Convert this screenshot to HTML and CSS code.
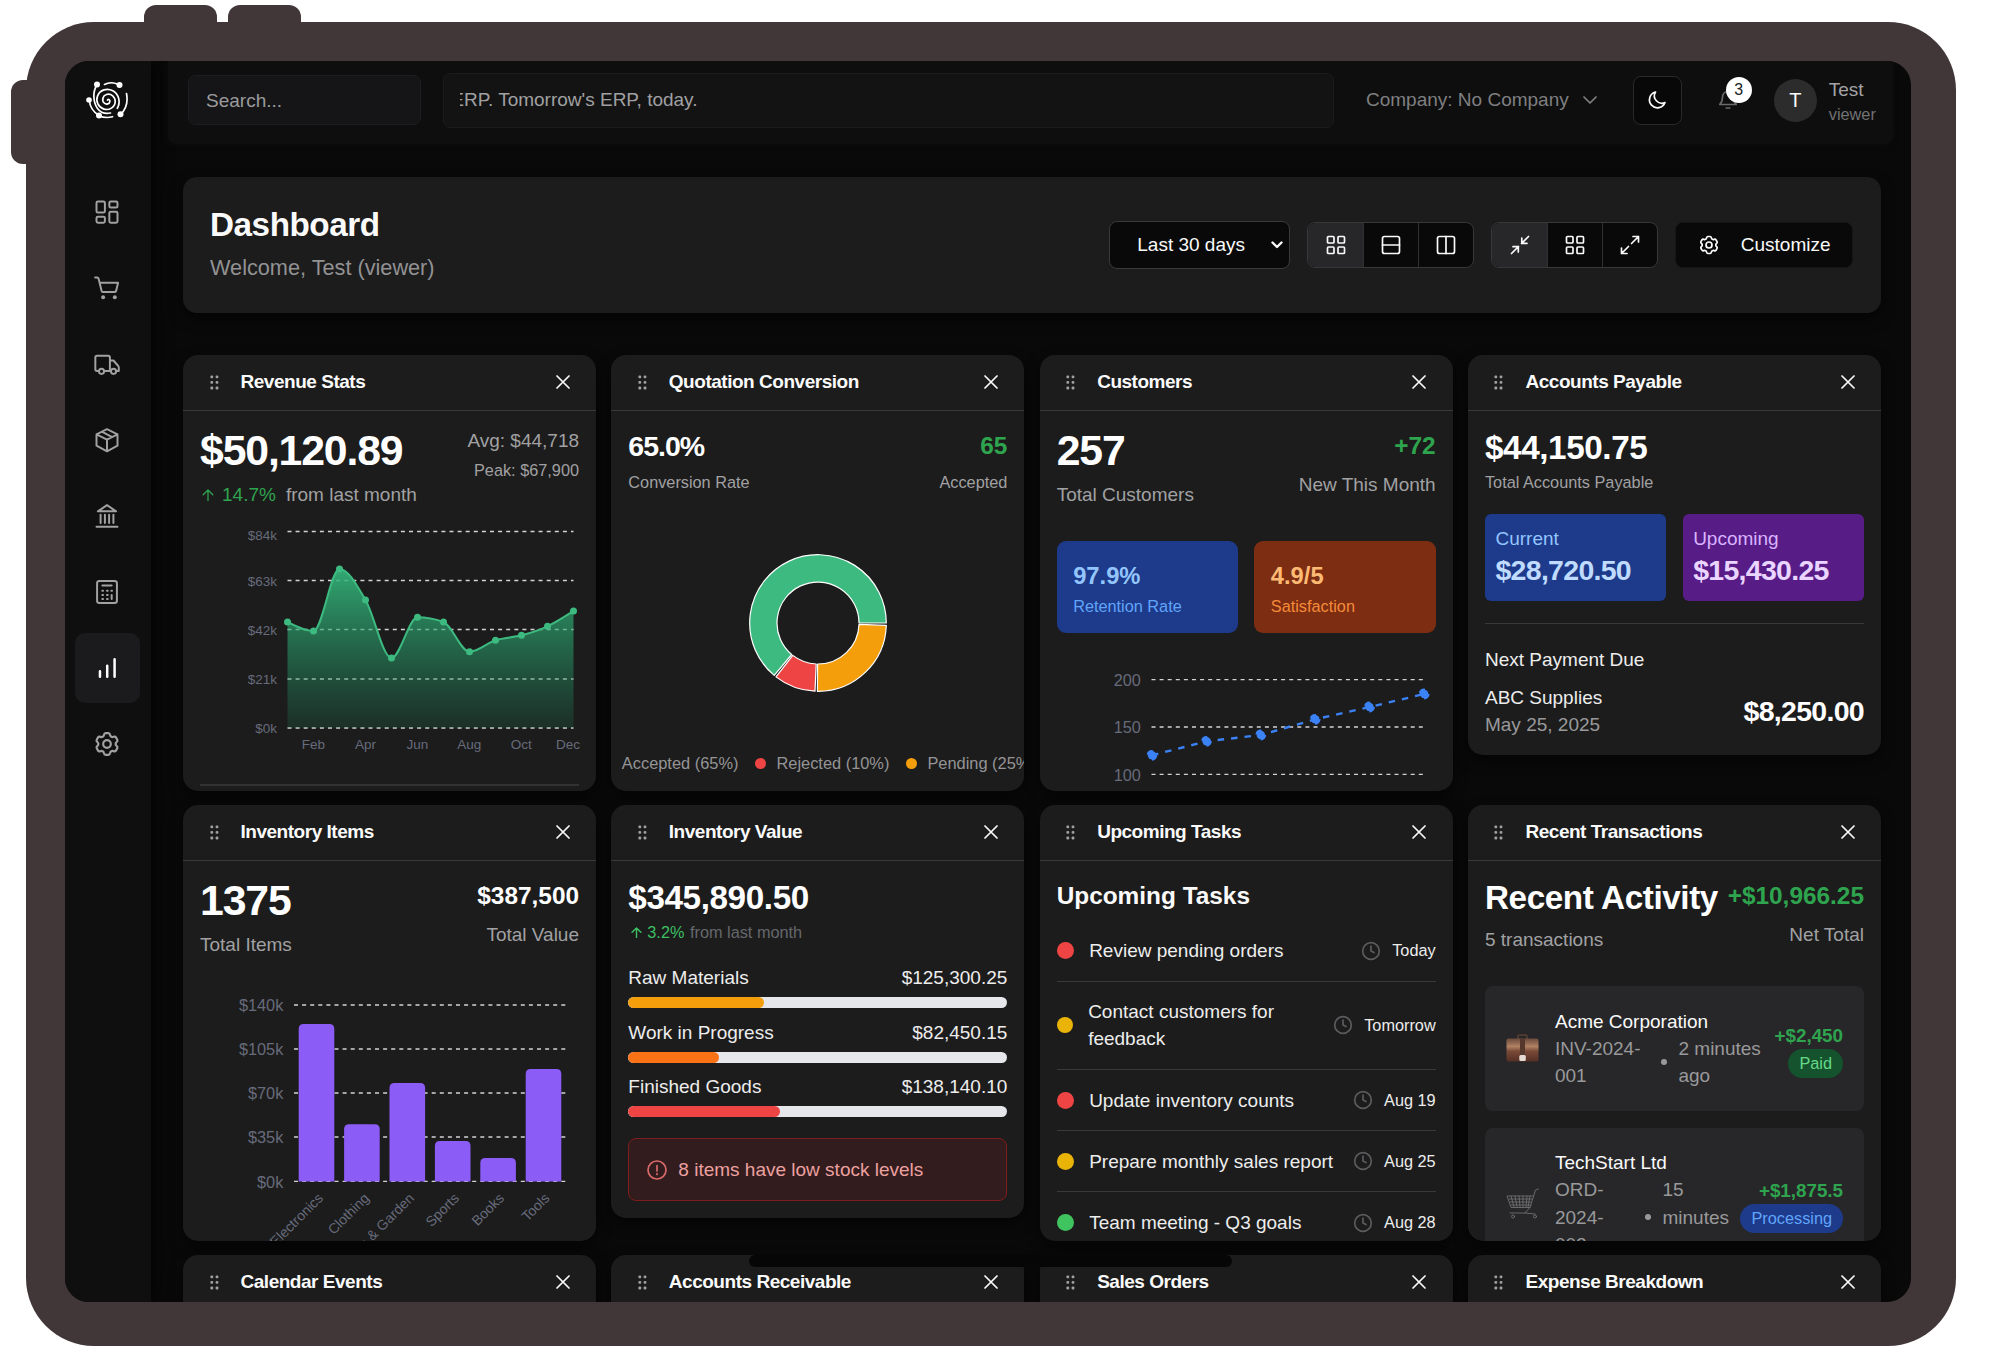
FILE: index.html
```html
<!DOCTYPE html>
<html lang="en">
<head>
  <meta charset="UTF-8">
  <meta name="viewport" content="width=device-width, initial-scale=1.0">
  <title>Dashboard</title>
  <link rel="stylesheet" href="styles.css">
</head>
<body>
  <!-- shared icons -->
  <svg width="0" height="0" class="sprite">
    <symbol id="i-close" viewBox="0 0 14 14"><path d="M1 1l12 12M13 1L1 13"/></symbol>
    <symbol id="i-drag" viewBox="0 0 9 15"><g fill="currentColor" stroke="none"><rect x="0.4" y="0.4" width="2.8" height="2.8" rx="1"/><rect x="5.6" y="0.4" width="2.8" height="2.8" rx="1"/><rect x="0.4" y="6" width="2.8" height="2.8" rx="1"/><rect x="5.6" y="6" width="2.8" height="2.8" rx="1"/><rect x="0.4" y="11.6" width="2.8" height="2.8" rx="1"/><rect x="5.6" y="11.6" width="2.8" height="2.8" rx="1"/></g></symbol>
    <symbol id="i-gear" viewBox="1 0 22 22"><path d="M9.6 3.9c.2-1 .5-1.4 1.3-1.4h2.2c.8 0 1.1.4 1.3 1.4.2 1.3 1.5 2 2.7 1.5 1-.4 1.5-.3 1.9.4l1.1 1.9c.4.7.2 1.200-.6 1.800-1 .8-1 2.200 0 3 .8.700 1 1.100.6 1.800l-1.100 1.900c-.4.7-.9.8-1.900.4-1.200-.5-2.500.2-2.700 1.500-.2 1-.5 1.400-1.300 1.400h-2.200c-.8 0-1.100-.4-1.300-1.400-.2-1.300-1.500-2-2.700-1.500-1 .4-1.500.3-1.900-.4l-1.100-1.900c-.4-.7-.2-1.100.6-1.800 1-.8 1-2.200 0-3-.8-.6-1-1.100-.6-1.800l1.100-1.900c.4-.7.9-.8 1.900-.4 1.200.5 2.500-.2 2.700-1.500z"/><circle cx="12" cy="11" r="3"/></symbol>
    <symbol id="i-grid" viewBox="0 0 20 20"><rect x="1.5" y="1.5" width="6.5" height="6.5" rx="1"/><rect x="12" y="1.5" width="6.5" height="6.5" rx="1"/><rect x="1.5" y="12" width="6.5" height="6.5" rx="1"/><rect x="12" y="12" width="6.5" height="6.5" rx="1"/></symbol>
    <symbol id="i-clock" viewBox="0 0 20 20"><circle cx="10" cy="10" r="8.3"/><path d="M10 5v5l3 1.6"/></symbol>
    <symbol id="i-up" viewBox="0 0 12 12"><path d="M6 11.5V1.2M1.2 5.7L6 1l4.8 4.7"/></symbol>
  </svg>

  <div class="device">
    <i class="key key-a"></i><i class="key key-b"></i><i class="key key-c"></i>

    <div class="screen">
      <nav class="sidebar">
        <svg class="logo" viewBox="0 0 44 40">
          <path d="M22.5 20c1-1.2 2.6-.2 2.4 1.4-.3 2.7-3.7 3.5-5.7 1.6-2.7-2.6-1.5-7.4 2.3-8.5 4.7-1.4 8.900 2.600 8.700 7.200-.3 5.700-6 8.900-11.300 7.400-5.600-1.700-8.400-7.700-6.400-13 2.300-6.300 9.700-8.400 15.300-5.300 6.300 3.500 8 11.600 4.500 17.500"/>
          <path d="M12 5C7.500 11.500 8 22 12.500 28.500c3 4 8 5.500 13 4.500M4.300 20c.5 6.500 4 12 9.700 15.500M34 5c-4-2.500-10-2.800-14.500-.6M35.500 34.300c5.500-5 7.500-13 6-20.800M14 35.700c4.500 2 9 2.300 13.500 1"/>
          <g class="nodes"><circle cx="12" cy="4.500" r="3"/><circle cx="34.500" cy="5" r="3"/><circle cx="4" cy="20" r="2.800"/><circle cx="14" cy="35.500" r="3"/><circle cx="35.500" cy="34.300" r="3"/></g>
        </svg>
        <a class="nav-item"><svg viewBox="0 0 24 24"><rect x="3" y="3" width="7.2" height="9.5" rx="1.2"/><rect x="14" y="3" width="7" height="5.2" rx="1.2"/><rect x="14" y="11.7" width="7" height="9.5" rx="1.2"/><rect x="3" y="16" width="7.2" height="5.2" rx="1.2"/></svg></a>
        <a class="nav-item"><svg viewBox="0 0 24 24"><path d="M1.8 3h1.7c.7 0 1.1.3 1.3 1l2.6 10.5c.2.7.6 1 1.3 1h9.7c.7 0 1.2-.4 1.4-1l1.7-7H5.6"/><g class="solid"><circle cx="8.7" cy="20" r="1.7"/><circle cx="18.7" cy="20" r="1.7"/></g></svg></a>
        <a class="nav-item"><svg viewBox="0 0 24 24"><path d="M5 18H3.5c-.9 0-1.500-.6-1.500-1.500v-10C2 5.600 2.600 5 3.500 5H13c.9 0 1.500.6 1.500 1.500V18H9.500M14.500 9h3l4 4.500c.4.500.6 1 .6 1.500V18h-1.600"/><circle cx="7.300" cy="18.300" r="2.200"/><circle cx="17.600" cy="18.300" r="2.200"/></svg></a>
        <a class="nav-item"><svg viewBox="0 0 24 24"><path d="M12 2.700l9 4.400v9.800l-9 4.800-9-4.800V7.100zM3 7.100l9 4.500 9-4.500M12 11.600v10M7.500 4.900l9 4.600"/></svg></a>
        <a class="nav-item"><svg viewBox="0 0 24 24"><path d="M3 21.300h18M12 2.700L4.200 8h15.600zM6.500 11v7M10.200 11v7M13.800 11v7M17.500 11v7"/></svg></a>
        <a class="nav-item"><svg viewBox="0 0 24 24"><rect x="3.500" y="2.500" width="17" height="19" rx="2"/><path d="M8 6.500h8M8 11h.6M12 11h.6M15.700 11h.6M8 14.500h.6M12 14.500h.6M8 18h.6M12 18h.6M16 14.500V18"/></svg></a>
        <a class="nav-item active"><svg viewBox="0 0 24 24"><path d="M5.500 20v-5M12.200 20V10M19 20V4"/></svg></a>
        <a class="nav-item"><svg viewBox="0 0 24 24"><use href="#i-gear"/></svg></a>
      </nav>

      <div class="main">
        <header class="topbar">
          <div class="search">Search...</div>
          <div class="ticker"><span>ERP. Tomorrow's ERP, today.</span></div>
          <div class="company">Company: No Company <svg viewBox="0 0 14 8"><path d="M1 1l6 6 6-6"/></svg></div>
          <div class="theme"><svg viewBox="0 0 20 20"><path d="M8.500 2A8 8 0 1 0 18 12.500 7.400 7.400 0 0 1 8.500 2z"/></svg></div>
          <div class="bell">
            <svg viewBox="0 0 20 22"><path d="M10 2.500c-3.500 0-5.500 2.500-5.500 6 0 4-1.200 5.300-2.700 7h16.400c-1.500-1.700-2.700-3-2.700-7 0-3.500-2-6-5.500-6zM8.300 19h3.400"/></svg>
            <span class="count">3</span>
          </div>
          <div class="avatar">T</div>
          <div class="who"><div>Test</div><small>viewer</small></div>
        </header>

        <section class="hero">
          <div>
            <h1>Dashboard</h1>
            <p>Welcome, Test (viewer)</p>
          </div>
          <div class="tools">
            <div class="select">Last 30 days <svg viewBox="0 0 12 8"><path d="M1.500 1.500L6 6l4.500-4.500"/></svg></div>
            <div class="group">
              <span class="on"><svg viewBox="0 0 20 20"><use href="#i-grid"/></svg></span>
              <span><svg viewBox="0 0 20 20"><rect x="1.500" y="1.500" width="17" height="17" rx="2"/><path d="M1.500 10h17"/></svg></span>
              <span><svg viewBox="0 0 20 20"><rect x="1.500" y="1.500" width="17" height="17" rx="2"/><path d="M10 1.500v17"/></svg></span>
            </div>
            <div class="group">
              <span class="on"><svg viewBox="0 0 20 20"><path d="M18.500 1.500l-7 7M11.800 3v5.300H17M1.500 18.500l7-7M3 11.700h5.300V17"/></svg></span>
              <span><svg viewBox="0 0 20 20"><use href="#i-grid"/></svg></span>
              <span><svg viewBox="0 0 20 20"><path d="M11.500 8.500l7-7M13 1.500h5.500V7M8.500 11.500l-7 7M1.500 13v5.500H7"/></svg></span>
            </div>
            <div class="customize"><svg viewBox="0 0 24 24"><use href="#i-gear"/></svg>Customize</div>
          </div>
        </section>

        <div class="cards">
          <article class="card tall">
            <header><svg class="drag"><use href="#i-drag"/></svg><h2>Revenue Stats</h2><svg class="close"><use href="#i-close"/></svg></header>
            <div class="body">
              <div class="top">
                <div><div class="xl">$50,120.89</div><div class="trend"><svg><use href="#i-up"/></svg><b>14.7%</b> from last month</div></div>
                <div class="right"><div class="avg">Avg: $44,718</div><div class="sm peak">Peak: $67,900</div></div>
              </div>
              <svg class="chart chart-revenue" viewBox="0 0 380 240">
                <defs><linearGradient id="fade" x1="0" y1="0" x2="0" y2="1"><stop offset="0" stop-color="#34b87c" stop-opacity=".9"/><stop offset="1" stop-color="#1f8a5f" stop-opacity=".18"/></linearGradient></defs>
                <path class="lines" d="M87.500 11.500h286M87.500 60.500h286M87.500 109.500h286M87.500 159h286M87.500 208h286"/>
                <path fill="url(#fade)" d="M87.500 102C96.200 106.500 104.800 111 113.500 111C122.200 111 130.800 49 139.500 49C148.200 49 156.800 65.200 165.500 80C174.200 94.800 182.800 138 191.500 138C200.200 138 208.800 97.300 217.500 97.300C226.200 97.300 234.800 98.900 243.500 102C252.200 105.100 260.800 131.700 269.500 131.700C278.200 131.700 286.800 123 295.500 120.300C304.200 117.600 312.800 117.600 321.500 115.300C330.200 113 338.800 110.300 347.500 106.300C356.200 102.200 364.800 96.600 373.500 91V208H87.500z"/>
                <path class="green-line" d="M87.500 102C96.200 106.500 104.800 111 113.500 111C122.200 111 130.800 49 139.500 49C148.200 49 156.800 65.200 165.500 80C174.200 94.800 182.800 138 191.500 138C200.200 138 208.800 97.300 217.500 97.300C226.200 97.300 234.800 98.900 243.500 102C252.200 105.100 260.800 131.700 269.500 131.700C278.200 131.700 286.800 123 295.500 120.300C304.200 117.600 312.800 117.600 321.500 115.300C330.200 113 338.800 110.300 347.500 106.300C356.200 102.200 364.800 96.600 373.500 91"/>
                <g fill="#3dba80"><circle cx="87.500" cy="102" r="3.500"/><circle cx="113.500" cy="111" r="3.500"/><circle cx="139.500" cy="49" r="3.500"/><circle cx="165.500" cy="80" r="3.500"/><circle cx="191.500" cy="138" r="3.500"/><circle cx="217.500" cy="97.300" r="3.500"/><circle cx="243.500" cy="102" r="3.500"/><circle cx="269.500" cy="131.700" r="3.500"/><circle cx="295.500" cy="120.300" r="3.500"/><circle cx="321.500" cy="115.300" r="3.500"/><circle cx="347.500" cy="106.300" r="3.500"/><circle cx="373.500" cy="91" r="3.500"/></g>
                <g class="ylab"><text x="77" y="19.500">$84k</text><text x="77" y="65.700">$63k</text><text x="77" y="114.700">$42k</text><text x="77" y="164">$21k</text><text x="77" y="213">$0k</text></g>
                <g class="xlab"><text x="113.500" y="228.500">Feb</text><text x="165.500" y="228.500">Apr</text><text x="217.300" y="228.500">Jun</text><text x="269.300" y="228.500">Aug</text><text x="321.300" y="228.500">Oct</text><text x="368" y="228.500">Dec</text></g>
              </svg>
              <hr>
            </div>
          </article>

          <article class="card tall">
            <header><svg class="drag"><use href="#i-drag"/></svg><h2>Quotation Conversion</h2><svg class="close"><use href="#i-close"/></svg></header>
            <div class="body">
              <div class="top">
                <div><div class="md rate">65.0%</div><div class="sm sub-tight">Conversion Rate</div></div>
                <div class="right"><div class="lg green">65</div><div class="sm sub-tight">Accepted</div></div>
              </div>
              <svg class="donut" viewBox="-70 -70 140 140">
                <path fill="#3dba80" d="M68.300 0A68.300 68.300 0 1 0 -43.800 52.400L-26.300 31.500A41 41 0 1 1 41 0z"/>
                <path fill="#ef4444" d="M-42 53.900A68.300 68.300 0 0 0 -3 68.200L-1.800 41A41 41 0 0 1 -25.200 32.400z"/>
                <path fill="#f59e0b" d="M-.6 68.300A68.300 68.300 0 0 0 68.300 2.400L41 1.400A41 41 0 0 1 -.4 41z"/>
              </svg>
              <div class="legend"><span><i class="bg-green"></i>Accepted (65%)</span><span><i class="bg-red"></i>Rejected (10%)</span><span><i class="bg-orange"></i>Pending (25%)</span></div>
            </div>
          </article>

          <article class="card tall">
            <header><svg class="drag"><use href="#i-drag"/></svg><h2>Customers</h2><svg class="close"><use href="#i-close"/></svg></header>
            <div class="body">
              <div class="top">
                <div><div class="xl">257</div><div class="sub">Total Customers</div></div>
                <div class="right"><div class="lg green">+72</div><div class="sub-r">New This Month</div></div>
              </div>
              <div class="tiles rates">
                <div class="tile blue"><strong>97.9%</strong><span>Retention Rate</span></div>
                <div class="tile brown"><strong>4.9/5</strong><span>Satisfaction</span></div>
              </div>
              <svg class="chart chart-customers" viewBox="0 0 380 200">
                <path class="lines" d="M94.500 19.700h273.500M94.500 67h273.500M94.500 114.300h273.500"/>
                <path class="blue-line" d="M95 95.300L149.500 81.300 203.800 75 258.200 59.300 312.500 47 367.200 34"/>
                <g class="blue-dots"><circle cx="95" cy="95.300" r="4.200"/><circle cx="149.500" cy="81.300" r="4.200"/><circle cx="203.800" cy="75" r="4.200"/><circle cx="258.200" cy="59.300" r="4.200"/><circle cx="312.500" cy="47" r="4.200"/><circle cx="367.200" cy="34" r="4.200"/></g>
                <g class="ylab big"><text x="83.800" y="26">200</text><text x="83.800" y="73.300">150</text><text x="83.800" y="120.600">100</text></g>
              </svg>
            </div>
          </article>

          <article class="card">
            <header><svg class="drag"><use href="#i-drag"/></svg><h2>Accounts Payable</h2><svg class="close"><use href="#i-close"/></svg></header>
            <div class="body">
              <div class="xmd">$44,150.75</div>
              <div class="sm total">Total Accounts Payable</div>
              <div class="tiles due">
                <div class="tile blue"><span>Current</span><strong>$28,720.50</strong></div>
                <div class="tile purple"><span>Upcoming</span><strong>$15,430.25</strong></div>
              </div>
              <div class="next">
                <div class="next-title">Next Payment Due</div>
                <div class="next-row"><div>ABC Supplies<br><span>May 25, 2025</span></div><strong class="md">$8,250.00</strong></div>
              </div>
            </div>
          </article>

          <article class="card tall">
            <header><svg class="drag"><use href="#i-drag"/></svg><h2>Inventory Items</h2><svg class="close"><use href="#i-close"/></svg></header>
            <div class="body">
              <div class="top">
                <div><div class="xl">1375</div><div class="sub">Total Items</div></div>
                <div class="right"><div class="lg">$387,500</div><div class="sub-r">Total Value</div></div>
              </div>
              <svg class="chart chart-items" viewBox="0 0 380 260">
                <path class="lines" d="M94 15h273M94 59h273M94 103h273M94 147h273M94 191.400h273"/>
                <g fill="#8b5cf6">
                  <path d="M98.700 191.400V39q0-5 5-5h25.600q5 0 5 5v152.400z"/>
                  <path d="M144.100 191.400V139.300q0-5 5-5h25.600q5 0 5 5v52.100z"/>
                  <path d="M189.500 191.400V97.900q0-5 5-5h25.600q5 0 5 5v93.500z"/>
                  <path d="M234.900 191.400V156q0-5 5-5h25.600q5 0 5 5v35.400z"/>
                  <path d="M280.300 191.400V172.900q0-5 5-5h25.600q5 0 5 5v18.500z"/>
                  <path d="M325.700 191.400V84q0-5 5-5h25.600q5 0 5 5v107.400z"/>
                </g>
                <g class="ylab big"><text x="83.300" y="21.300">$140k</text><text x="83.300" y="65.300">$105k</text><text x="83.300" y="109.300">$70k</text><text x="83.300" y="153.300">$35k</text><text x="83.300" y="197.500">$0k</text></g>
                <g class="tilt"><text transform="translate(124 209) rotate(-45)">Electronics</text><text transform="translate(170 209) rotate(-45)">Clothing</text><text transform="translate(215 209) rotate(-45)">Home &amp; Garden</text><text transform="translate(260 209) rotate(-45)">Sports</text><text transform="translate(305 209) rotate(-45)">Books</text><text transform="translate(350.500 209) rotate(-45)">Tools</text></g>
              </svg>
            </div>
          </article>

          <article class="card">
            <header><svg class="drag"><use href="#i-drag"/></svg><h2>Inventory Value</h2><svg class="close"><use href="#i-close"/></svg></header>
            <div class="body">
              <div class="xmd">$345,890.50</div>
              <div class="sm total growth"><svg><use href="#i-up"/></svg><b>3.2%</b> from last month</div>
              <div class="stock">
                <div class="stock-row"><span>Raw Materials</span><span>$125,300.25</span></div>
                <div class="meter"><i class="bg-orange" style="width: 35.8%"></i></div>
                <div class="stock-row"><span>Work in Progress</span><span>$82,450.15</span></div>
                <div class="meter"><i class="bg-deep" style="width: 24%"></i></div>
                <div class="stock-row"><span>Finished Goods</span><span>$138,140.10</span></div>
                <div class="meter"><i class="bg-red" style="width: 40%"></i></div>
              </div>
              <div class="alert"><svg viewBox="0 0 20 20"><circle cx="10" cy="10" r="9"/><path d="M10 5.500v5.500M10 13.500v1"/></svg>8 items have low stock levels</div>
            </div>
          </article>

          <article class="card tall">
            <header><svg class="drag"><use href="#i-drag"/></svg><h2>Upcoming Tasks</h2><svg class="close"><use href="#i-close"/></svg></header>
            <div class="body">
              <h3>Upcoming Tasks</h3>
              <ul class="tasks">
                <li><i class="bg-red"></i><span>Review pending orders</span><svg><use href="#i-clock"/></svg><time>Today</time></li>
                <li><i class="bg-yellow small"></i><span>Contact customers for<br>feedback</span><svg><use href="#i-clock"/></svg><time>Tomorrow</time></li>
                <li><i class="bg-red"></i><span>Update inventory counts</span><svg><use href="#i-clock"/></svg><time>Aug 19</time></li>
                <li><i class="bg-yellow"></i><span>Prepare monthly sales report</span><svg><use href="#i-clock"/></svg><time>Aug 25</time></li>
                <li><i class="bg-lime"></i><span>Team meeting - Q3 goals</span><svg><use href="#i-clock"/></svg><time>Aug 28</time></li>
              </ul>
            </div>
          </article>

          <article class="card tall">
            <header><svg class="drag"><use href="#i-drag"/></svg><h2>Recent Transactions</h2><svg class="close"><use href="#i-close"/></svg></header>
            <div class="body">
              <div class="top">
                <div><div class="xmd">Recent Activity</div><div class="sub-a">5 transactions</div></div>
                <div class="right"><div class="lg green">+$10,966.25</div><div class="sub-r">Net Total</div></div>
              </div>
              <div class="deals">
                <div class="deal">
                  <svg class="emoji" viewBox="0 0 33 33">
                    <defs><linearGradient id="leather" x1="0" y1="0" x2="0" y2="1"><stop offset="0" stop-color="#6b4a3c"/><stop offset=".35" stop-color="#b08263"/><stop offset=".55" stop-color="#7a4a38"/><stop offset="1" stop-color="#553025"/></linearGradient></defs>
                    <path d="M12 7V4.500Q12 3 14 3h5q2 0 2 1.500V7" fill="none" stroke="#4e3a32" stroke-width="2"/>
                    <rect x=".5" y="6.500" width="32" height="23" rx="2" fill="url(#leather)"/>
                    <rect x="14" y="6.500" width="5" height="18" fill="#56382c"/>
                    <rect x="13.300" y="23" width="6.500" height="6" rx="1.500" fill="#e4dcd4"/>
                  </svg>
                  <div class="info"><div class="name">Acme Corporation</div><div class="meta"><span class="ref">INV-2024-<br>001</span><i></i><span>2 minutes<br>ago</span></div></div>
                  <div class="sum"><b>+$2,450</b><em class="paid">Paid</em></div>
                </div>
                <div class="deal">
                  <svg class="emoji cart" viewBox="0 0 33 33">
                    <path d="M32.500 2l-3 1-5.500 17.500H5L1 9h26M3 12h23M4 15h21M5 18h20M5 9l3 11M9 9l2 11M13 9l1 11M17 9v11M21 9l-1 11M24 9l-2 11M24 20.500l-5 5.500H4M19 26l10 1"/>
                    <circle cx="7" cy="29.500" r="1.500"/><circle cx="29" cy="29.500" r="1.500"/>
                  </svg>
                  <div class="info"><div class="name">TechStart Ltd</div><div class="meta"><span class="ref ref-b">ORD-<br>2024-<br>002</span><i></i><span>15<br>minutes<br>ago</span></div></div>
                  <div class="sum"><b>+$1,875.5</b><em class="processing">Processing</em></div>
                </div>
              </div>
            </div>
          </article>

          <article class="card tall"><header><svg class="drag"><use href="#i-drag"/></svg><h2>Calendar Events</h2><svg class="close"><use href="#i-close"/></svg></header></article>
          <article class="card tall"><header><svg class="drag"><use href="#i-drag"/></svg><h2>Accounts Receivable</h2><svg class="close"><use href="#i-close"/></svg></header></article>
          <article class="card tall"><header><svg class="drag"><use href="#i-drag"/></svg><h2>Sales Orders</h2><svg class="close"><use href="#i-close"/></svg></header></article>
          <article class="card tall"><header><svg class="drag"><use href="#i-drag"/></svg><h2>Expense Breakdown</h2><svg class="close"><use href="#i-close"/></svg></header></article>
        </div>
      </div>
      <div class="home-bar"></div>
    </div>
  </div>
</body>
</html>
```
FILE: styles.css
```css
* {
  box-sizing: border-box;
}
body {
  margin: 0;
  background: #fff;
  color: #fafafa;
  font-family: "Liberation Sans", Arial, sans-serif;
  font-size: 19px;
  line-height: 28px;
  overflow: hidden;
}
h1, h2, h3, p, ul {
  margin: 0;
  padding: 0;
}
svg {
  display: block;
  flex: none;
  fill: none;
  stroke: currentColor;
  stroke-width: 1.7;
  stroke-linecap: round;
  stroke-linejoin: round;
}
.sprite {
  position: absolute;
}

/* tablet frame */
.device {
  position: relative;
  width: 1930px;
  height: 1324px;
  margin: 22px 0 0 26px;
  padding: 39px 45px 44px 39px;
  border-radius: 68px;
  background: #423738;
}
.key {
  position: absolute;
  background: #423738;
}
.key-a, .key-b {
  top: -17px;
  width: 73px;
  height: 20px;
  border-radius: 12px 12px 0 0;
}
.key-a {
  left: 118px;
}
.key-b {
  left: 202px;
}
.key-c {
  left: -15px;
  top: 58px;
  width: 20px;
  height: 84px;
  border-radius: 12px 0 0 12px;
}
.screen {
  position: relative;
  display: flex;
  height: 1241px;
  border-radius: 24px;
  background: #090909;
  overflow: hidden;
}
.home-bar {
  position: absolute;
  left: 684px;
  top: 1194px;
  width: 483px;
  height: 12px;
  border-radius: 6px;
  background: #060606;
}

/* sidebar */
.sidebar {
  width: 86px;
  margin-right: -1px;
  padding: 19px 11px 0 10px;
  background: #0f0f10;
  box-shadow: 4px 0 14px rgba(0, 0, 0, .75);
  color: #a1a1a1;
}
.logo {
  width: 44px;
  height: 40px;
  margin: 0 auto 56.5px 10px;
  color: #fff;
  stroke-width: 1.7;
}
.nodes {
  fill: #fff;
  stroke: none;
}
.nav-item {
  display: flex;
  align-items: center;
  justify-content: center;
  height: 70px;
  margin-bottom: 6px;
  border-radius: 10px;
}
.nav-item svg {
  width: 28px;
  height: 28px;
  margin-right: 1px;
}
.nav-item.active {
  background: #1b1b1d;
  color: #fff;
}
.nav-item.active svg {
  width: 26px;
  height: 26px;
  stroke-width: 2.3;
}
.solid {
  fill: currentColor;
  stroke: none;
}

/* top bar */
.main {
  flex: 1;
  min-width: 0;
}
.topbar {
  display: flex;
  align-items: center;
  height: 83px;
  margin: 0 18px;
  padding: 0 0 5px 20px;
  border-radius: 0 0 8px 8px;
  background: #0e0e0e;
  box-shadow: 0 0 6px #0e0e0e;
}
.search {
  width: 233px;
  height: 50px;
  padding: 0 17px;
  border: 1px solid #1d1d1f;
  border-radius: 7px;
  background: #151517;
  color: #9b9b9e;
  line-height: 49px;
}
.ticker {
  width: 891px;
  height: 55px;
  margin-left: 22px;
  padding: 0 16px;
  border: 1px solid #1b1b1c;
  border-radius: 7px;
  background: #131313;
  color: #a0a0a2;
  line-height: 51px;
}
.ticker span {
  display: block;
  overflow: hidden;
  text-indent: -8.7px;
  white-space: nowrap;
}
.company {
  display: flex;
  align-items: center;
  gap: 14px;
  margin-left: 32px;
  color: #7f7f81;
  white-space: nowrap;
}
.company svg {
  width: 14px;
  height: 8px;
}
.theme {
  display: flex;
  align-items: center;
  justify-content: center;
  width: 49px;
  height: 49px;
  margin-left: 36px;
  border: 1px solid #29292b;
  border-radius: 8px;
  background: #080808;
}
.theme svg {
  width: 20px;
  height: 20px;
}
.bell {
  position: relative;
  margin-left: 36px;
  color: #6a6a6c;
}
.bell svg {
  width: 20px;
  height: 22px;
}
.count {
  position: absolute;
  left: 8px;
  top: -12px;
  width: 26px;
  height: 26px;
  border-radius: 50%;
  background: #fff;
  color: #222;
  font-size: 16px;
  line-height: 26px;
  text-align: center;
}
.avatar {
  width: 43px;
  height: 43px;
  margin-left: 36px;
  border-radius: 50%;
  background: #2c2c2c;
  font-size: 20px;
  line-height: 43px;
  text-align: center;
}
.who {
  margin-left: 12px;
  padding-top: 3px;
  color: #a3a3a5;
  line-height: 24px;
}
.who small {
  display: block;
  color: #727274;
  font-size: 16.3px;
}

/* page header */
.hero {
  display: flex;
  align-items: center;
  justify-content: space-between;
  height: 136px;
  margin: 33px 30px 0 33px;
  padding: 0 28px 0 27px;
  border-radius: 14px;
  background: #1c1c1c;
  box-shadow: 0 6px 14px rgba(0, 0, 0, .5);
}
.hero h1 {
  margin-top: -6px;
  font-size: 33.25px;
  letter-spacing: -.45px;
  line-height: 46px;
}
.hero p {
  margin-top: 5px;
  color: #929294;
  font-size: 21.7px;
  line-height: 30px;
}
.tools {
  display: flex;
  align-items: center;
  gap: 17px;
  margin-top: -1px;
}
.select, .customize {
  display: flex;
  align-items: center;
  border-radius: 8px;
  background: #090909;
}
.select {
  justify-content: space-between;
  width: 181px;
  height: 48px;
  padding: 0 6px 0 27px;
  border: 1px solid #3a3a3b;
}
.select svg {
  width: 12px;
  height: 8px;
  stroke-width: 2.4;
}
.group {
  display: flex;
  height: 46px;
  border: 1px solid #38383a;
  border-radius: 8px;
  background: #090909;
  overflow: hidden;
}
.group span {
  display: flex;
  align-items: center;
  justify-content: center;
  width: 55px;
}
.group span + span {
  border-left: 1px solid #303032;
}
.group .on {
  background: #27272a;
}
.group svg {
  width: 20px;
  height: 20px;
}
.customize {
  gap: 21px;
  height: 46px;
  padding: 0 21.5px;
  border: 1px solid #151515;
}
.customize svg {
  width: 22px;
  height: 22px;
}

/* widgets */
.cards {
  display: grid;
  grid-template-columns: repeat(4, 1fr);
  grid-auto-rows: 436px;
  gap: 14.2px 15.3px;
  align-items: start;
  margin: 41.5px 30px 0 33px;
}
.card {
  border-radius: 15px;
  background: #1c1c1c;
  box-shadow: 0 6px 14px rgba(0, 0, 0, .55);
  overflow: hidden;
}
.card.tall {
  height: 436px;
}
.card > header {
  display: flex;
  align-items: center;
  height: 56px;
  padding: 0 26.5px;
  border-bottom: 1.5px solid #39393b;
}
.card h2 {
  flex: 1;
  font-size: 19px;
  letter-spacing: -.475px;
}
.drag {
  width: 9px;
  height: 15px;
  margin-right: 22px;
  color: #a0a0a0;
}
.close {
  width: 14px;
  height: 14px;
}
.body {
  padding: 17.3px 17px 17px;
}
.top {
  display: flex;
  justify-content: space-between;
  color: #a1a1a3;
  white-space: nowrap;
}
.right {
  text-align: right;
}
.xl, .xmd, .md, .lg {
  color: #fff;
  font-weight: bold;
  white-space: nowrap;
}
.xl {
  font-size: 42.75px;
  letter-spacing: -1.15px;
  line-height: 45px;
}
.xmd {
  font-size: 33.25px;
  letter-spacing: -.4px;
  line-height: 40px;
}
.md {
  font-size: 28.5px;
  letter-spacing: -.71px;
  line-height: 36px;
}
.md.rate {
  letter-spacing: -1px;
}
.lg {
  font-size: 24.4px;
  line-height: 36px;
}
.lg.green {
  color: #2fa44f;
}
.sm {
  color: #a1a1a3;
  font-size: 16.3px;
  line-height: 24px;
}
.sub, .trend {
  margin-top: 8.5px;
}
.sub-r {
  margin-top: 7px;
}
.sub-tight {
  margin-top: 6.4px;
}
.sub-a {
  margin-top: 8.4px;
}
.total {
  margin-top: 2.4px;
}
.trend, .growth {
  display: flex;
  align-items: center;
}
.trend svg, .growth svg {
  width: 12px;
  height: 12px;
  color: #2fa44f;
  stroke-width: 1.3;
}
.trend svg {
  margin: 0 8px 0 2px;
}
.trend b, .growth b {
  color: #2fa44f;
  font-weight: normal;
}
.trend b {
  margin-right: 10px;
}
.avg {
  line-height: 26px;
}
.peak {
  margin-top: 4px;
}
hr {
  margin: 24.5px 0 0;
  border: 0;
  border-top: 2px solid #323234;
}

/* charts */
.chart {
  width: 380px;
  stroke: none;
  overflow: visible;
}
.chart text {
  fill: #676b7b;
  font-size: 13.5px;
}
.chart .big text {
  font-size: 16.3px;
}
.ylab {
  text-anchor: end;
}
.xlab {
  text-anchor: middle;
}
.tilt {
  text-anchor: end;
}
.chart .tilt text {
  font-size: 14px;
}
.lines {
  stroke: #d2d2d2;
  stroke-width: 1.3;
  stroke-dasharray: 4 4.1;
  stroke-linecap: butt;
}
.green-line {
  stroke: #3dba80;
  stroke-width: 2;
}
.blue-line {
  stroke: #3b82f6;
  stroke-width: 2.4;
  stroke-dasharray: 6.5 7;
  stroke-linecap: butt;
}
.blue-dots {
  fill: #3b82f6;
  stroke: #3b82f6;
  stroke-width: 2.4;
  stroke-dasharray: 6.5 7;
  stroke-linecap: butt;
}
.chart-revenue {
  height: 240px;
  margin-top: 10.5px;
}
.chart-customers {
  height: 200px;
  margin-top: 26.7px;
}
.chart-items {
  height: 260px;
  margin-top: 30.7px;
}
.donut {
  width: 140px;
  height: 140px;
  margin: 59px auto 0;
  stroke: #fff;
  stroke-width: 1.2;
}
.legend {
  display: flex;
  gap: 16.5px;
  margin: 58px 0 0 -28px;
  color: #949496;
  font-size: 16.4px;
  line-height: 24px;
  white-space: nowrap;
}
.legend span {
  display: flex;
  align-items: center;
  gap: 10.5px;
}
.legend i {
  width: 11px;
  height: 11px;
  border-radius: 50%;
}
.bg-green {
  background: #3dba80;
}
.bg-red {
  background: #ef4444;
}
.bg-orange {
  background: #f59e0b;
}
.bg-deep {
  background: #f97316;
}
.bg-yellow {
  background: #eab308;
}
.bg-lime {
  background: #3fc45f;
}

/* coloured tiles */
.tiles {
  display: grid;
  grid-template-columns: 1fr 1fr;
  gap: 16.3px;
}
.tile span, .tile strong {
  display: block;
}
.rates {
  margin-top: 31.5px;
}
.rates .tile {
  height: 92.5px;
  padding: 18px 16.5px 0;
  border-radius: 9px;
}
.rates strong {
  font-size: 23.75px;
  line-height: 34px;
}
.rates span {
  margin-top: 1px;
  font-size: 16.3px;
  line-height: 24px;
}
.due {
  margin-top: 20.3px;
}
.due .tile {
  height: 86.7px;
  padding: 11px 10.5px 0;
  border-radius: 6px;
}
.due span {
  line-height: 27px;
}
.due strong {
  font-size: 28.5px;
  letter-spacing: -.71px;
  line-height: 36px;
}
.blue {
  background: #1e3a8a;
}
.rates .blue strong, .due .blue span {
  color: #93c5fd;
}
.rates .blue span {
  color: #60a5fa;
}
.due .blue strong {
  color: #bfdbfe;
}
.brown {
  background: #7c2d12;
}
.brown strong {
  color: #fdba74;
}
.brown span {
  color: #f58b39;
}
.purple {
  background: #581c87;
}
.purple span {
  color: #d8b4fe;
}
.purple strong {
  color: #e9d5ff;
}
.next {
  margin-top: 22.3px;
  padding-top: 21.5px;
  border-top: 1px solid #39393b;
  color: #ededed;
}
.next-row {
  display: flex;
  align-items: center;
  justify-content: space-between;
  margin-top: 10px;
  line-height: 27px;
}
.next-row span {
  color: #99999b;
}

/* inventory value */
.growth {
  color: #66686d;
}
.growth svg {
  width: 11px;
  height: 11px;
  margin: 0 5px 0 3px;
  color: #3bbf62;
  stroke-width: 1.6;
}
.growth b {
  margin-right: 5.5px;
  color: #3bbf62;
}
.stock {
  margin-top: 20px;
}
.stock-row {
  display: flex;
  justify-content: space-between;
  color: #ededed;
}
.meter {
  height: 11px;
  margin: 5px 0 10.3px;
  border-radius: 6px;
  background: #e5e7eb;
  overflow: hidden;
}
.meter i {
  display: block;
  height: 11px;
  border-radius: 6px;
}
.alert {
  display: flex;
  align-items: center;
  gap: 11px;
  height: 62.5px;
  margin-top: 21.5px;
  padding-left: 18px;
  border: 1px solid #7f1d1d;
  border-radius: 8px;
  background: #321c1d;
  color: #eda0a0;
}
.alert svg {
  width: 20px;
  height: 20px;
  color: #d96a6a;
}

/* tasks */
.body h3 {
  font-size: 24.4px;
  line-height: 36px;
}
.tasks {
  margin-top: 6.7px;
  list-style: none;
}
.tasks li {
  display: flex;
  align-items: center;
  padding: 16.6px 0;
  border-bottom: 1px solid #39393b;
  color: #ededed;
  line-height: 27px;
}
.tasks i {
  width: 17px;
  height: 17px;
  flex: none;
  border-radius: 50%;
}
.tasks .small {
  width: 16px;
  height: 16px;
}
.tasks span {
  flex: 1;
  padding-left: 15.5px;
  white-space: nowrap;
}
.tasks svg {
  width: 20px;
  height: 20px;
  color: #5b5b5e;
}
.tasks time {
  padding-left: 11px;
  font-size: 16.3px;
}

/* transactions */
.deals {
  margin-top: 32px;
}
.deal {
  display: flex;
  align-items: center;
  margin-bottom: 16.4px;
  padding: 21.5px 21px;
  border-radius: 8px;
  background: #272729;
  line-height: 27.3px;
}
.emoji {
  width: 33px;
  height: 33px;
  margin-right: 16px;
  stroke: none;
}
.emoji.cart {
  stroke: #77777a;
  stroke-width: .8;
}
.info {
  flex: 1;
}
.meta {
  display: flex;
  align-items: center;
  color: #99999b;
  white-space: nowrap;
}
.ref {
  width: 106px;
}
.ref-b {
  width: 90px;
}
.meta i {
  width: 6px;
  height: 6px;
  margin-right: 11.5px;
  border-radius: 50%;
  background: #99999b;
}
.sum {
  display: flex;
  flex-direction: column;
  align-items: flex-end;
  padding-top: 2px;
}
.sum b {
  color: #2fa44f;
  font-size: 18.8px;
}
.sum em {
  padding: 0 11px;
  border-radius: 15px;
  font-size: 16.3px;
  font-style: normal;
  line-height: 29px;
}
.paid {
  background: #14532d;
  color: #66d988;
}
.processing {
  background: #1e3a8a;
  color: #60a5fa;
}
```
